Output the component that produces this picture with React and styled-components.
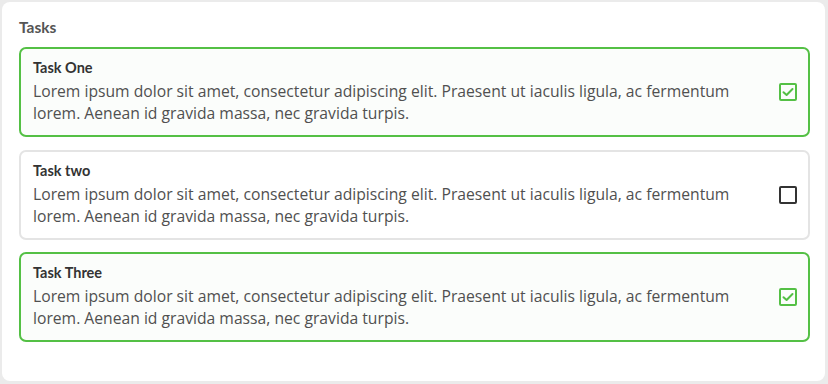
import React from "react";
import styled, { createGlobalStyle } from "styled-components";

const Global = createGlobalStyle`
  html, body { margin: 0; padding: 0; background: #ebebeb; }
  body { width: 828px; height: 384px; overflow: hidden; }
`;

const Card = styled.div`
  box-sizing: border-box;
  margin: 2px 3px 3px 2px;
  height: 379px;
  background: #ffffff;
  border-radius: 8px;
  padding: 15px 15px 0 17px;
`;

const Heading = styled.h2`
  margin: 0 0 10px 0;
  font-family: Lato, sans-serif;
  font-weight: 700;
  font-size: 15.5px;
  line-height: 20px;
  color: #555555;
`;

const List = styled.div`
  display: flex;
  flex-direction: column;
  gap: 12.5px;
`;

const Item = styled.div`
  box-sizing: border-box;
  height: 90px;
  display: flex;
  align-items: center;
  border: 2px solid ${(p) => (p.$done ? "#54c045" : "#e4e4e4")};
  background: ${(p) => (p.$done ? "#fbfdfb" : "#ffffff")};
  border-radius: 7px;
  padding: 0 11px 0 12px;
`;

const Body = styled.div`
  flex: 1;
  display: flex;
  flex-direction: column;
`;

const Title = styled.div`
  font-family: Lato, sans-serif;
  font-weight: 700;
  font-size: 14.5px;
  line-height: 18px;
  color: #333333;
  margin-top: -1px;
  margin-bottom: 3px;
`;

const Text = styled.div`
  font-family: "Open Sans", sans-serif;
  font-size: 15.7px;
  line-height: 22px;
  color: #505050;
  max-width: 720px;
`;

const Box = styled.div`
  box-sizing: border-box;
  width: 18px;
  height: 18px;
  flex: none;
  border: 2px solid ${(p) => (p.$done ? "#54c045" : "#333333")};
  border-radius: 2px;
  display: flex;
  align-items: center;
  justify-content: center;
`;

const tasks = [
  { title: "Task One", done: true },
  { title: "Task two", done: false },
  { title: "Task Three", done: true },
];

const lorem =
  "Lorem ipsum dolor sit amet, consectetur adipiscing elit. Praesent ut iaculis ligula, ac fermentum lorem. Aenean id gravida massa, nec gravida turpis.";

export default function App() {
  return (
    <>
      <Global />
      <Card>
        <Heading>Tasks</Heading>
        <List>
          {tasks.map((t) => (
            <Item key={t.title} $done={t.done}>
              <Body>
                <Title>{t.title}</Title>
                <Text>{lorem}</Text>
              </Body>
              <Box $done={t.done}>
                {t.done && (
                  <svg width="12" height="10" viewBox="0 0 12 10">
                    <path
                      d="M1.5 5.2 L4.6 8 L10.5 2"
                      fill="none"
                      stroke="#54c045"
                      strokeWidth="2"
                      strokeLinecap="round"
                      strokeLinejoin="round"
                    />
                  </svg>
                )}
              </Box>
            </Item>
          ))}
        </List>
      </Card>
    </>
  );
}
